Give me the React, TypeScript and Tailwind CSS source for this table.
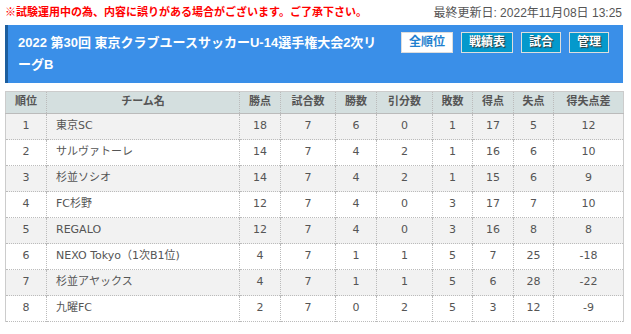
import React from 'react'

interface Row {
  rank: number
  team: string
  pts: number
  played: number
  won: number
  drawn: number
  lost: number
  gf: number
  ga: number
  gd: number
}

const rows: Row[] = [
  { rank: 1, team: '東京SC', pts: 18, played: 7, won: 6, drawn: 0, lost: 1, gf: 17, ga: 5, gd: 12 },
  { rank: 2, team: 'サルヴァトーレ', pts: 14, played: 7, won: 4, drawn: 2, lost: 1, gf: 16, ga: 6, gd: 10 },
  { rank: 3, team: '杉並ソシオ', pts: 14, played: 7, won: 4, drawn: 2, lost: 1, gf: 15, ga: 6, gd: 9 },
  { rank: 4, team: 'FC杉野', pts: 12, played: 7, won: 4, drawn: 0, lost: 3, gf: 17, ga: 7, gd: 10 },
  { rank: 5, team: 'REGALO', pts: 12, played: 7, won: 4, drawn: 0, lost: 3, gf: 16, ga: 8, gd: 8 },
  { rank: 6, team: 'NEXO Tokyo（1次B1位)', pts: 4, played: 7, won: 1, drawn: 1, lost: 5, gf: 7, ga: 25, gd: -18 },
  { rank: 7, team: '杉並アヤックス', pts: 4, played: 7, won: 1, drawn: 1, lost: 5, gf: 6, ga: 28, gd: -22 },
  { rank: 8, team: '九曜FC', pts: 2, played: 7, won: 0, drawn: 2, lost: 5, gf: 3, ga: 12, gd: -9 },
]

const headers = ['順位', 'チーム名', '勝点', '試合数', '勝数', '引分数', '敗数', '得点', '失点', '得失点差']
const widths = ['w-[41px]', 'w-[193px]', 'w-[41px]', 'w-[55px]', 'w-[41px]', 'w-[56px]', 'w-[40px]', 'w-[41px]', 'w-[40px]', 'w-[70px]']

const tableFont = { fontFamily: '"DejaVu Sans", "Noto Sans CJK JP", sans-serif' }

const App = () => {
  return (
    <div className="h-[334px] w-[631px] overflow-hidden bg-white" style={{ fontFamily: '"Liberation Sans", "Noto Sans CJK JP", sans-serif' }}>
      {/* お知らせ */}
      <div className="flex h-[25px] items-center justify-between pl-[5px] pr-[9px]">
        <p className="text-[11px] font-bold text-[#f00]">
          ※試験運用中の為、内容に誤りがある場合がございます。ご了承下さい。
        </p>
        <p className="text-[12px] text-[#555]">最終更新日: 2022年11月08日 13:25</p>
      </div>

      {/* タイトル */}
      <div className="mx-[5px] flex h-[58px] w-[618px] justify-between border-l-[3px] border-[#1d5e9e] bg-[#3a8fe8] pl-[10px] pr-[14px] pt-[7px]">
        <h1 className="w-[362px] text-[13px] font-bold leading-[22px] text-white [line-break:anywhere]">
          2022 第30回 東京クラブユースサッカーU-14選手権大会2次リーグB
        </h1>
        <div className="flex h-[21px] gap-[8px]">
          <button className="h-[21px] border border-[#ddd] bg-white px-[7px] text-[12px] font-bold leading-[19px] text-[#1f7fcf]">
            全順位
          </button>
          <button className="h-[21px] border border-[#ddd] bg-[#0499cc] px-[7px] text-[12px] font-bold leading-[19px] text-white [text-shadow:1px_1px_1px_#333]">
            戦績表
          </button>
          <button className="h-[21px] border border-[#ddd] bg-[#0499cc] px-[7px] text-[12px] font-bold leading-[19px] text-white [text-shadow:1px_1px_1px_#333]">
            試合
          </button>
          <button className="h-[21px] border border-[#ddd] bg-[#0499cc] px-[7px] text-[12px] font-bold leading-[19px] text-white [text-shadow:1px_1px_1px_#333]">
            管理
          </button>
        </div>
      </div>

      {/* 順位表 */}
      <div className="mx-[5px] mt-[8px] w-[618px]" style={tableFont}>
        <table className="w-[618px] table-fixed border-collapse border-x border-t border-[#ccc] text-[11px] text-[#555]">
          <thead className="bg-[#d4dfdf]">
            <tr className="h-[22px] border-b border-[#bbb]">
              {headers.map((h, i) => (
                <th
                  key={h}
                  className={`${widths[i]} border-l border-dotted border-[#bbb] p-0 text-center font-bold first:border-l-0`}
                >
                  {h}
                </th>
              ))}
            </tr>
          </thead>
          <tbody>
            {rows.map((r, idx) => (
              <tr key={r.rank} className={`h-[26px] border-b border-dotted border-[#bbb] ${idx % 2 === 0 ? 'bg-[#f2f2f2]' : 'bg-white'}`}>
                <td className="p-0 text-center">{r.rank}</td>
                <td className="border-l border-dotted border-[#bbb] py-0 pl-[9px] text-left">{r.team}</td>
                <td className="border-l border-dotted border-[#bbb] p-0 text-center">{r.pts}</td>
                <td className="border-l border-dotted border-[#bbb] p-0 text-center">{r.played}</td>
                <td className="border-l border-dotted border-[#bbb] p-0 text-center">{r.won}</td>
                <td className="border-l border-dotted border-[#bbb] p-0 text-center">{r.drawn}</td>
                <td className="border-l border-dotted border-[#bbb] p-0 text-center">{r.lost}</td>
                <td className="border-l border-dotted border-[#bbb] p-0 text-center">{r.gf}</td>
                <td className="border-l border-dotted border-[#bbb] p-0 text-center">{r.ga}</td>
                <td className="border-l border-dotted border-[#bbb] p-0 text-center">{r.gd}</td>
              </tr>
            ))}
          </tbody>
        </table>
      </div>
    </div>
  )
}

export default App
